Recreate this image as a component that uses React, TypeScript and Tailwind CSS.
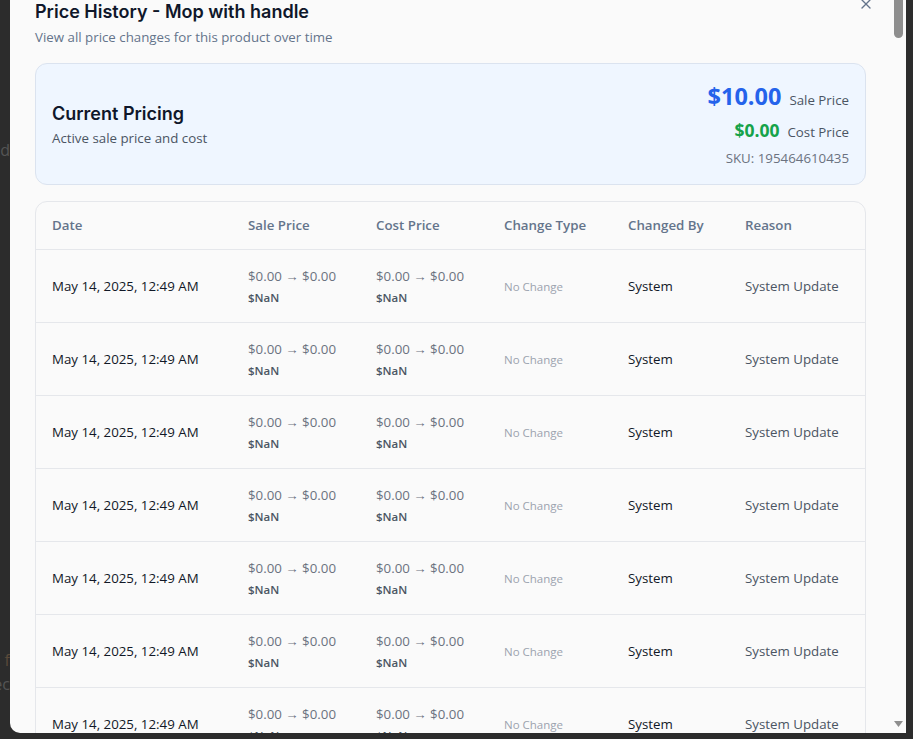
import { X } from "lucide-react";

const history = Array.from({ length: 9 }, () => ({
  date: "May 14, 2025, 12:49 AM",
  sale: "$0.00 → $0.00",
  saleDiff: "$NaN",
  cost: "$0.00 → $0.00",
  costDiff: "$NaN",
  type: "No Change",
  by: "System",
  reason: "System Update",
}));

const columns = [
  { label: "Date", width: "w-[196px]" },
  { label: "Sale Price", width: "w-[128px]" },
  { label: "Cost Price", width: "w-[128px]" },
  { label: "Change Type", width: "w-[124px]" },
  { label: "Changed By", width: "w-[117px]" },
  { label: "Reason", width: "w-[136px]" },
];

function PriceCell({ change, diff }: { change: string; diff: string }) {
  return (
    <div className="flex flex-col">
      <span className="text-[13.3px] leading-5 text-[#6b7280]">{change}</span>
      <span className="mt-1 text-[11.5px] font-semibold leading-4 text-[#4b5563]">{diff}</span>
    </div>
  );
}

export default function App() {
  return (
    <div className="flex h-[739px] w-[913px] overflow-hidden bg-[#2c2c2c] font-['Open_Sans',sans-serif]">
      {/* page behind the overlay */}
      <div className="flex w-[10px] flex-col items-end overflow-hidden whitespace-nowrap text-base text-[#555]">
        <span className="mt-[138px] leading-6">ed</span>
        <span className="mt-[486px] leading-6 text-[#5a4a3a]">f</span>
        <span className="leading-6">ec</span>
      </div>

      <div className="relative -mt-[20px] flex h-[753px] w-[896px] overflow-hidden rounded-bl-[10px] bg-[#fafafa]">
        <div className="flex-1 overflow-hidden px-[25px] pt-[18px]">
          <h2 className="font-['Inter',sans-serif] text-lg font-semibold leading-7 text-[#0f172a]">
            Price History - Mop with handle
          </h2>
          <p className="mt-px text-[13.3px] leading-5 text-[#64748b]">
            View all price changes for this product over time
          </p>

          <div className="mt-4 flex items-center justify-between rounded-xl border border-[#dbe3ef] bg-[#eff6ff] p-4">
            <div>
              <h3 className="font-['Inter',sans-serif] text-lg font-semibold leading-7 text-[#0f172a]">
                Current Pricing
              </h3>
              <p className="text-[13.3px] leading-5 text-[#4b5563]">Active sale price and cost</p>
            </div>
            <div className="flex flex-col items-end">
              <div className="flex items-baseline gap-2">
                <span className="text-[23.5px] font-bold leading-8 text-[#2563eb]">$10.00</span>
                <span className="text-[13.3px] text-[#4b5563]">Sale Price</span>
              </div>
              <div className="mt-1 flex items-baseline gap-2">
                <span className="text-[17.5px] font-bold leading-7 text-[#16a34a]">$0.00</span>
                <span className="text-[13.3px] text-[#4b5563]">Cost Price</span>
              </div>
              <p className="mt-1 text-[13.3px] leading-5 text-[#6b7280]">SKU: 195464610435</p>
            </div>
          </div>

          <div className="mt-4 overflow-hidden rounded-xl border border-[#e5e7eb]">
            <table className="w-full table-fixed border-collapse text-left">
              <thead>
                <tr className="border-b border-[#e5e7eb]">
                  {columns.map((c) => (
                    <th
                      key={c.label}
                      className={`${c.width} px-4 pb-[14px] pt-[13px] text-[13.3px] font-semibold leading-5 text-[#64748b]`}
                    >
                      {c.label}
                    </th>
                  ))}
                </tr>
              </thead>
              <tbody>
                {history.map((row, i) => (
                  <tr key={i} className="border-b border-[#e5e7eb]">
                    <td className="px-4 pb-[15px] pt-[17px] text-[13.3px] text-[#111827]">{row.date}</td>
                    <td className="px-4 py-4">
                      <PriceCell change={row.sale} diff={row.saleDiff} />
                    </td>
                    <td className="px-4 py-4">
                      <PriceCell change={row.cost} diff={row.costDiff} />
                    </td>
                    <td className="px-4 pb-[15px] pt-[17px] text-[11.5px] text-[#9ca3af]">{row.type}</td>
                    <td className="px-4 pb-[15px] pt-[17px] text-[13.3px] text-[#111827]">{row.by}</td>
                    <td className="px-4 pb-[15px] pt-[17px] text-[13.3px] text-[#4b5563]">{row.reason}</td>
                  </tr>
                ))}
              </tbody>
            </table>
          </div>
        </div>

        {/* scrollbar */}
        <div className="flex w-[15px] flex-col items-center justify-between bg-[#fafafa] pb-[6px] pt-[15px]">
          <div className="h-[43px] w-[9px] rounded-full bg-[#8e8e8e]" />
          <svg width="9" height="6" viewBox="0 0 9 6">
            <path d="M0 0h9L4.5 6z" fill="#8e8e8e" />
          </svg>
        </div>

        <button
          type="button"
          aria-label="Close"
          className="absolute right-[32px] top-[16px] text-[#64748b]"
        >
          <X size={16} strokeWidth={2} />
        </button>
      </div>
    </div>
  );
}
